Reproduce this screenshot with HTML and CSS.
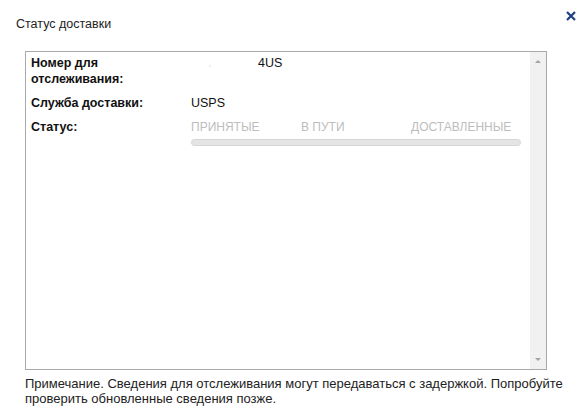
FILE: index.html
```html
<!DOCTYPE html>
<html lang="ru">
  <head>
    <meta charset="utf-8">
    <title>Статус доставки</title>
    <link rel="stylesheet" href="styles.css">
  </head>
  <body>
    <div class="dialog">
      <div class="head">
        <h2 class="title">Статус доставки</h2>
        <button class="close" type="button" aria-label="Закрыть">
          <svg width="10" height="10" viewBox="0 0 10 10">
            <path d="M1 1 L9 9 M9 1 L1 9" stroke="#1e3f7e" stroke-width="2.2" fill="none"/>
          </svg>
        </button>
      </div>
      <div class="panel">
        <div class="info">
          <div class="label">Номер для отслеживания:</div>
          <div class="value"><span class="hidden-num">.</span>4US</div>
          <div class="label">Служба доставки:</div>
          <div class="value">USPS</div>
          <div class="label">Статус:</div>
          <div class="value">
            <div class="steps">
              <span>ПРИНЯТЫЕ</span>
              <span>В ПУТИ</span>
              <span class="last">ДОСТАВЛЕННЫЕ</span>
            </div>
            <div class="bar"></div>
          </div>
        </div>
        <div class="scroll">
          <span class="arrow up"></span>
          <span class="arrow down"></span>
        </div>
      </div>
      <p class="note">Примечание. Сведения для отслеживания могут передаваться с задержкой. Попробуйте проверить обновленные сведения позже.</p>
    </div>
  </body>
</html>
```

FILE: styles.css
```css
body {
    margin: 0;
    background: #fff;
    font-family: "Liberation Sans", Arial, sans-serif;
    font-size: 12px;
    color: #222;
}

.dialog {
    padding: 0 10px 0 25px;
}

.head {
    display: flex;
    justify-content: space-between;
    align-items: flex-start;
    margin-left: -9px;
    height: 51px;
}
.title {
    margin: 17px 0 0;
    font-size: 12.5px;
    font-weight: normal;
    color: #222;
}
.close {
    margin: 9px 0 0;
    padding: 0;
    border: 0;
    background: none;
    width: 10px;
    height: 10px;
}

.panel {
    display: flex;
    width: 520px;
    height: 317px;
    border: 1px solid #a9a9a9;
}
.info {
    flex: 1;
    display: grid;
    grid-template-columns: 160px 1fr;
    align-content: start;
    row-gap: 8px;
    padding: 3px 0 0 5px;
}
.label {
    font-weight: bold;
    font-size: 12.5px;
    line-height: 16px;
    color: #111;
}
.value {
    font-size: 12.5px;
    line-height: 16px;
    color: #111;
}
.hidden-num {
    display: inline-block;
    width: 67px;
    padding-left: 17px;
    color: #ddd;
    box-sizing: border-box;
}

.steps {
    display: grid;
    grid-template-columns: 110px 110px 1fr;
    width: 330px;
    color: #bdbdbd;
    font-size: 12px;
}
.steps .last {
    text-align: right;
    padding-right: 10px;
}
.bar {
    width: 328px;
    height: 5px;
    margin-top: 4px;
    border: 1px solid #d6d6d6;
    border-radius: 4px;
    background: #e4e4e4;
}

.scroll {
    width: 16px;
    background: #f1f1f1;
    display: flex;
    flex-direction: column;
    justify-content: space-between;
    align-items: center;
    padding: 8px 0;
}
.arrow {
    width: 0;
    height: 0;
    border-left: 3px solid transparent;
    border-right: 3px solid transparent;
}
.arrow.up {
    border-bottom: 3px solid #a3a3a3;
}
.arrow.down {
    border-top: 3px solid #a3a3a3;
}

.note {
    margin: 6px 0 0;
    font-size: 13px;
    line-height: 15px;
    width: 548px;
}
```
